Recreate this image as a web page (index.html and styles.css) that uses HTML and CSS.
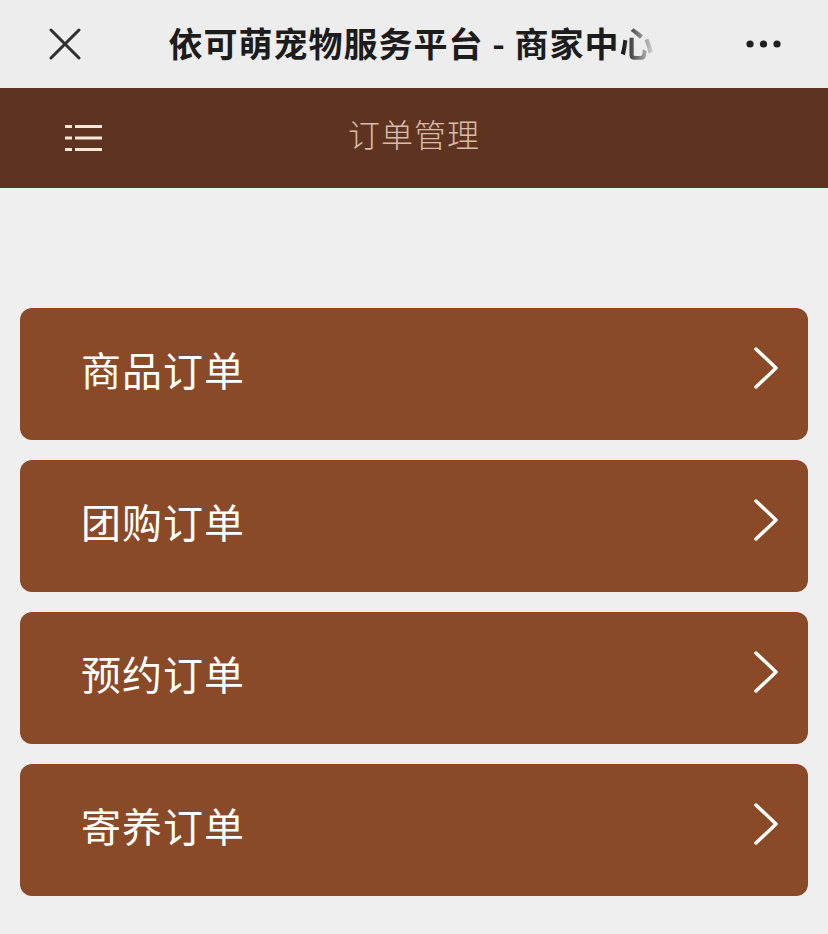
FILE: index.html
```html
<!DOCTYPE html>
<html lang="zh-CN">
<head>
<meta charset="utf-8">
<title>订单管理</title>
<link rel="stylesheet" href="styles.css">
</head>
<body>
<div class="topbar">
  <svg class="close" width="32" height="32" viewBox="0 0 32 32"><path d="M2 2 L30 30 M30 2 L2 30" stroke="#2e2e2e" stroke-width="3" stroke-linecap="round" fill="none"/></svg>
  <div class="apptitle">依可萌宠物服务平台 - 商家中<span class="fade">心</span></div>
  <svg class="more" width="36" height="10" viewBox="0 0 36 10"><circle cx="4" cy="5" r="3.6" fill="#1f1f1f"/><circle cx="17.5" cy="5" r="3.6" fill="#1f1f1f"/><circle cx="31" cy="5" r="3.6" fill="#1f1f1f"/></svg>
</div>
<header class="header">
  <svg class="menu" width="38" height="28" viewBox="0 0 38 28"><g stroke="#f6e9dc" stroke-width="3"><path d="M0 2.5 H7 M10 2.5 H37 M0 14 H7 M10 14 H37 M0 25.5 H7 M10 25.5 H37"/></g></svg>
  <div class="pagetitle">订单管理</div>
</header>
<main class="list">
  <a class="card"><span class="label">商品订单</span><svg class="chev" width="26" height="42" viewBox="0 0 26 42"><path d="M3 2 L23 21 L3 40" stroke="#fff" stroke-width="3.5" fill="none" stroke-linecap="round" stroke-linejoin="round"/></svg></a>
  <a class="card"><span class="label">团购订单</span><svg class="chev" width="26" height="42" viewBox="0 0 26 42"><path d="M3 2 L23 21 L3 40" stroke="#fff" stroke-width="3.5" fill="none" stroke-linecap="round" stroke-linejoin="round"/></svg></a>
  <a class="card"><span class="label">预约订单</span><svg class="chev" width="26" height="42" viewBox="0 0 26 42"><path d="M3 2 L23 21 L3 40" stroke="#fff" stroke-width="3.5" fill="none" stroke-linecap="round" stroke-linejoin="round"/></svg></a>
  <a class="card"><span class="label">寄养订单</span><svg class="chev" width="26" height="42" viewBox="0 0 26 42"><path d="M3 2 L23 21 L3 40" stroke="#fff" stroke-width="3.5" fill="none" stroke-linecap="round" stroke-linejoin="round"/></svg></a>
</main>
</body>
</html>
```
FILE: styles.css
```css
html, body {
  margin: 0;
  padding: 0;
  background: #efefef;
  font-family: "Noto Sans CJK SC", "Noto Sans", sans-serif;
}
.topbar {
  height: 88px;
  background: #ededed;
  display: flex;
  align-items: center;
  padding: 0 46px 0 49px;
  box-sizing: border-box;
}
.close { flex: none; }
.apptitle {
  flex: 1;
  text-align: center;
  font-size: 34px;
  font-weight: 700;
  color: #1c1c1c;
  letter-spacing: 1px;
  padding-right: 4px;
  margin-top: -3px;
}
.fade {
  background: linear-gradient(90deg, #1c1c1c 10%, #c8c8c8 90%);
  -webkit-background-clip: text;
  background-clip: text;
  color: transparent;
}
.more { flex: none; }
.header {
  height: 100px;
  background: #5e3320;
  display: flex;
  align-items: center;
  padding-left: 65px;
  position: relative;
}
.menu { flex: none; }
.pagetitle {
  position: absolute;
  left: 0;
  right: 0;
  top: 22px;
  text-align: center;
  font-size: 32px;
  font-weight: 300;
  color: #d6bcab;
  letter-spacing: 1px;
  pointer-events: none;
}
.list {
  padding: 120px 20px 0;
  display: flex;
  flex-direction: column;
  gap: 20px;
}
.card {
  height: 132px;
  background: #8a4a28;
  border-radius: 12px;
  display: flex;
  align-items: center;
  justify-content: space-between;
  padding: 0 29px 0 61px;
  box-sizing: border-box;
  color: #fff;
}
.label {
  font-size: 40px;
  letter-spacing: 1px;
  margin-top: -10px;
}
.chev {
  margin-top: -12px;
}
```
